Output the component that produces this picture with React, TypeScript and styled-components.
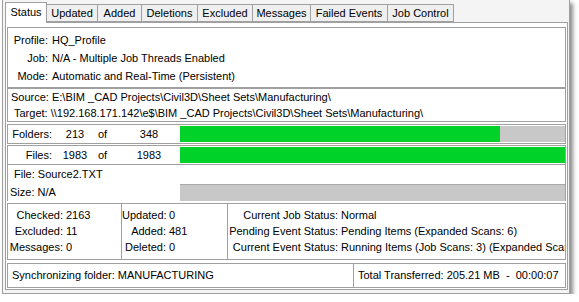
import React from 'react';
import styled, { createGlobalStyle } from 'styled-components';

const GlobalStyle = createGlobalStyle`
  html, body {
    margin: 0;
    padding: 0;
    background: #ffffff;
  }
  body {
    font-family: Tahoma, "Liberation Sans", "DejaVu Sans", sans-serif;
    font-size: 11px;
    color: #000;
  }
`;

const Frame = styled.div`
  box-sizing: border-box;
  margin-left: 2px;
  width: 568px;
  height: 294px;
  padding: 2px 1px 2px 2px;
  background: #f4f4f4;
  border: 1px solid #a0a0a0;
  border-top: none;
  box-shadow: 3px 3px 4px rgba(0, 0, 0, 0.45);
  display: flex;
  flex-direction: column;
`;

const TabStrip = styled.div`
  display: flex;
  align-items: flex-end;
  height: 20px;
`;

const Tab = styled.div<{ active?: boolean; w: number }>`
  box-sizing: border-box;
  width: ${p => p.w}px;
  height: ${p => (p.active ? 21 : 18)}px;
  margin-bottom: ${p => (p.active ? -1 : 0)}px;
  padding-bottom: ${p => (p.active ? 2 : 0)}px;
  border: 1px solid #a0a0a0;
  border-bottom: ${p => (p.active ? 'none' : '1px solid #a0a0a0')};
  border-left-width: ${p => (p.active ? 1 : 0)}px;
  background: ${p => (p.active ? '#ffffff' : '#efefef')};
  display: flex;
  align-items: center;
  justify-content: center;
  white-space: nowrap;
  position: relative;
  z-index: ${p => (p.active ? 1 : 0)};
`;

const Page = styled.div`
  box-sizing: border-box;
  height: 268px;
  border: 1px solid #a0a0a0;
  background: #ffffff;
  padding: 4px 1px 1px 1px;
  display: flex;
  flex-direction: column;
`;

const Box = styled.div<{ h: number; top?: number; pad?: string }>`
  box-sizing: border-box;
  height: ${p => p.h}px;
  margin-top: ${p => p.top || 0}px;
  border: 1px solid #a0a0a0;
  padding: ${p => p.pad || '0'};
  overflow: hidden;
`;

const Line = styled.div<{ h: number; indent?: number }>`
  height: ${p => p.h}px;
  line-height: ${p => p.h}px;
  padding-left: ${p => p.indent || 0}px;
  white-space: nowrap;
  overflow: hidden;
`;

const LabeledLine = styled.div<{ h: number; labelW: number }>`
  display: grid;
  grid-template-columns: ${p => p.labelW}px 1fr;
  column-gap: 4px;
  height: ${p => p.h}px;
  line-height: ${p => p.h}px;
  white-space: nowrap;
  overflow: hidden;
`;

const Label = styled.span`
  text-align: right;
`;

const CountRow = styled.div<{ top: number }>`
  box-sizing: border-box;
  display: grid;
  grid-template-columns: 172px 1fr;
  margin-top: ${p => p.top}px;
  border: 1px solid #a0a0a0;
  height: 20px;
`;

const Counts = styled.div`
  display: grid;
  grid-template-columns: 44px 46px 22px 58px;
  align-items: center;
  line-height: 18px;
`;

const Num = styled.span`
  text-align: center;
`;

const Bar = styled.div`
  padding: 1px 0;
  height: 100%;
  box-sizing: border-box;
`;

const Track = styled.div`
  background: #c8c8c8;
  height: 100%;
  display: flex;
`;

const Fill = styled.div`
  background: #00d22a;
  height: 100%;
`;

const FileBlock = styled.div`
  box-sizing: border-box;
  height: 36px;
  display: grid;
  grid-template-columns: 172px 1fr;
  grid-template-rows: 18px 17px;
  row-gap: 1px;
  border-left: 1px solid #a0a0a0;
  border-right: 1px solid #a0a0a0;
`;

const EmptyBar = styled.div`
  background: #c8c8c8;
  border-top: 1px solid #a8a8a8;
`;

const Stats = styled.div`
  box-sizing: border-box;
  display: grid;
  grid-template-columns: 113px 106px 1fr;
  margin-top: 2px;
  border: 1px solid #a0a0a0;
  height: 57px;
`;

const StatCol = styled.div<{ divider?: boolean }>`
  border-left: ${p => (p.divider ? '1px solid #a0a0a0' : 'none')};
  padding-top: 3px;
  overflow: hidden;
`;

const StatLine = styled.div<{ labelW: number }>`
  display: grid;
  grid-template-columns: ${p => p.labelW}px 1fr;
  column-gap: 3px;
  height: 16px;
  line-height: 16px;
  white-space: nowrap;
`;

const Footer = styled.div`
  box-sizing: border-box;
  display: grid;
  grid-template-columns: 345px 1fr;
  margin-top: 3px;
  border: 1px solid #a0a0a0;
  height: 25px;
  line-height: 23px;
  white-space: nowrap;
`;

const FooterCell = styled.div<{ divider?: boolean }>`
  padding-left: 4px;
  border-left: ${p => (p.divider ? '1px solid #a0a0a0' : 'none')};
  overflow: hidden;
`;

const tabs = [
  { name: 'Status', w: 42 },
  { name: 'Updated', w: 51 },
  { name: 'Added', w: 44 },
  { name: 'Deletions', w: 56 },
  { name: 'Excluded', w: 55 },
  { name: 'Messages', w: 58 },
  { name: 'Failed Events', w: 77 },
  { name: 'Job Control', w: 66 },
];

const counts = [
  { label: 'Folders:', done: 213, total: 348, pct: 83 },
  { label: 'Files:', done: 1983, total: 1983, pct: 100 },
];

const stats = [
  {
    labelW: 55,
    rows: [
      ['Checked:', '2163'],
      ['Excluded:', '11'],
      ['Messages:', '0'],
    ],
  },
  {
    labelW: 44,
    rows: [
      ['Updated:', '0'],
      ['Added:', '481'],
      ['Deleted:', '0'],
    ],
  },
  {
    labelW: 110,
    rows: [
      ['Current Job Status:', 'Normal'],
      ['Pending Event Status:', 'Pending Items (Expanded Scans: 6)'],
      ['Current Event Status:', 'Running Items (Job Scans: 3) (Expanded Scans: 3)'],
    ],
  },
];

export default function App() {
  return (
    <>
      <GlobalStyle />
      <Frame>
        <TabStrip>
          {tabs.map((t, i) => (
            <Tab key={t.name} w={t.w} active={i === 0}>
              {t.name}
            </Tab>
          ))}
        </TabStrip>
        <Page>
          <Box h={61} pad="3px 0 2px 0">
            <LabeledLine h={18} labelW={40}>
              <Label>Profile:</Label>
              <span>HQ_Profile</span>
            </LabeledLine>
            <LabeledLine h={18} labelW={40}>
              <Label>Job:</Label>
              <span>N/A - Multiple Job Threads Enabled</span>
            </LabeledLine>
            <LabeledLine h={18} labelW={40}>
              <Label>Mode:</Label>
              <span>Automatic and Real-Time (Persistent)</span>
            </LabeledLine>
          </Box>
          <Box h={34}>
            <Line h={16} indent={3}>Source: E:\BIM _CAD Projects\Civil3D\Sheet Sets\Manufacturing\</Line>
            <Line h={16} indent={6}>Target: \\192.168.171.142\e$\BIM _CAD Projects\Civil3D\Sheet Sets\Manufacturing\</Line>
          </Box>
          {counts.map((c, i) => (
            <CountRow key={c.label} top={i === 0 ? 2 : 1}>
              <Counts>
                <Label>{c.label}</Label>
                <Num>{c.done}</Num>
                <span>of</span>
                <Num>{c.total}</Num>
              </Counts>
              <Bar>
                <Track>
                  <Fill style={{ width: `${c.pct}%` }} />
                </Track>
              </Bar>
            </CountRow>
          ))}
          <FileBlock>
            <Line h={18} indent={6}>File: Source2.TXT</Line>
            <span />
            <Line h={17} indent={2}>Size: N/A</Line>
            <EmptyBar />
          </FileBlock>
          <Stats>
            {stats.map((col, i) => (
              <StatCol key={i} divider={i > 0}>
                {col.rows.map(([label, value]) => (
                  <StatLine key={label} labelW={col.labelW}>
                    <Label>{label}</Label>
                    <span>{value}</span>
                  </StatLine>
                ))}
              </StatCol>
            ))}
          </Stats>
          <Footer>
            <FooterCell>Synchronizing folder: MANUFACTURING</FooterCell>
            <FooterCell divider>Total Transferred: 205.21 MB&nbsp; - &nbsp;00:00:07</FooterCell>
          </Footer>
        </Page>
      </Frame>
    </>
  );
}
